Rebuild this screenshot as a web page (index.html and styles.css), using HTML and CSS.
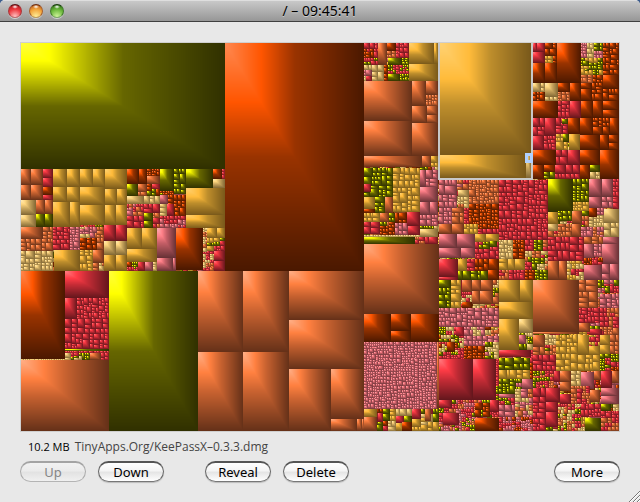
FILE: index.html
```html
<!DOCTYPE html>
<html lang="en">
<head>
<meta charset="utf-8">
<meta name="viewport" content="width=device-width, initial-scale=1">
<title>/ – 09:45:41</title>
<link rel="stylesheet" href="styles.css">
</head>
<body>
<div class="window">
  <header class="titlebar">
    <div class="lights">
      <button class="light light-close" aria-label="Close"></button>
      <button class="light light-minimize" aria-label="Minimize"></button>
      <button class="light light-zoom" aria-label="Zoom"></button>
    </div>
    <h1 class="title">/ – 09:45:41</h1>
  </header>
  <main class="content">
    <canvas class="treemap" id="treemap" width="598" height="388" role="img" aria-label="Disk usage treemap"></canvas>
    <p class="status"><span class="size">10.2 MB</span><span class="path">TinyApps.Org/KeePassX–0.3.3.dmg</span></p>
    <div class="actions">
      <button class="push" disabled>Up</button>
      <button class="push">Down</button>
      <button class="push group-start">Reveal</button>
      <button class="push">Delete</button>
      <button class="push far-end">More</button>
    </div>
  </main>
  <svg class="grip" viewBox="0 0 12 12" aria-hidden="true">
    <path d="M1 12 12 1M5 12l7-7M9 12l3-3" stroke="#777" fill="none"/>
    <path d="M2 12 12 2M6 12l6-6M10 12l2-2" stroke="#fff" fill="none"/>
  </svg>
</div>
<script src="treemap.js"></script>
</body>
</html>
```
FILE: styles.css
```css
* { box-sizing: border-box; }

body {
  margin: 0;
  background: #3c5c8c;
  font-family: "Noto Sans", "Open Sans", sans-serif;
  color: #000;
}

.window {
  position: relative;
  min-height: 100vh;
  background: #e8e8e8;
  border-radius: 5px 5px 0 0;
  overflow: hidden;
}

.titlebar {
  display: grid;
  grid-template-columns: 1fr auto 1fr;
  align-items: center;
  height: 22px;
  padding: 0 8px;
  background: linear-gradient(#c8c8c8, #969696);
  border-top: 1px solid #dedede;
  border-bottom: 1px solid #404040;
}

.lights { display: flex; gap: 7px; }

.light {
  width: 14px;
  height: 14px;
  padding: 0;
  border: 1px solid;
  border-radius: 50%;
  box-shadow: 0 1px 0 #d0d0d0;
}

.light-close {
  border-color: #5c1012 #a8383a #c06a6a;
  background: radial-gradient(ellipse 3px 2px at 50% 15%, #fff, transparent), radial-gradient(circle at 50% 95%, #ffc4c4, #ee3b40 55%, #a00c10);
}

.light-minimize {
  border-color: #6c2c10 #a8602c #c09a5a;
  background: radial-gradient(ellipse 3px 2px at 50% 15%, #fff, transparent), radial-gradient(circle at 50% 95%, #fff09a, #f3a63c 55%, #b24c10);
}

.light-zoom {
  border-color: #173c0c #437c2c #7ca868;
  background: radial-gradient(ellipse 3px 2px at 50% 15%, #fff, transparent), radial-gradient(circle at 50% 95%, #d0f59a, #6bb83c 55%, #24600f);
}

.title {
  margin: 0;
  font-size: 14px;
  font-weight: 400;
  line-height: 20px;
  text-shadow: 0 1px 0 #ccc;
}

.content { padding: 20px 20px 18px; }

.treemap {
  display: block;
  width: 100%;
  height: auto;
  border: 1px solid #cfcfcf;
}

.status {
  display: flex;
  gap: 5px;
  margin: 7px 8px 6px;
  font-family: "Open Sans", "Noto Sans", sans-serif;
  font-size: 11px;
  line-height: 16px;
}

.path { font-size: 12px; color: #444; }

.actions {
  display: flex;
  gap: 12px;
}

.push {
  width: 66px;
  height: 21px;
  padding: 0;
  border: 1px solid #555;
  border-width: 2px 1px 1px;
  border-color: #555 #666 #777;
  border-radius: 11px;
  background: linear-gradient(#fff, #f4f4f4 45%, #e4e4e4 50%, #fff);
  box-shadow: 0 1px 1px #bbb;
  font: 13px/18px "Noto Sans", "Open Sans", sans-serif;
  color: #000;
}

.push:disabled {
  border-color: #a4a4a4 #aaa #b4b4b4;
  background: linear-gradient(#f2f2f2, #ebebeb 45%, #e2e2e2 50%, #f0f0f0);
  box-shadow: none;
  color: #858585;
}

.group-start { margin-left: 29px; }
.far-end { margin-left: auto; }

.grip {
  position: absolute;
  right: 0;
  bottom: 0;
  width: 12px;
  height: 12px;
}
```
FILE: treemap.js
```js
// Each entry: left top right bottom colours [cell size].
// A cell size marks a folder of small files, subdivided to about that size.
const ORIGIN = [21, 43];
const DATA = `
21 43 619 431 RGCPTYO 4
21 43 225 169 Y;225 43 364 271 O;21 169 31 185 C;31 169 43 185 C;43 169 53 178 R;43 178 53 187 R
21 185 31 200 C;31 185 43 200 C;43 187 53 195 O;43 195 53 200 R;21 200 36 215 T;21 215 36 227 T
36 200 45 214 C;45 200 53 214 C;36 214 45 227 Y;45 214 53 227 Y
53 169 67 187 G;67 169 80 187 G;80 169 93 187 G;93 169 105 187 G;105 169 127 189 G
53 187 67 202 G;67 187 80 202 G;80 187 105 205 G;105 189 117 205 G;117 189 127 205 G
53 202 70 227 G;70 202 80 227 G;80 205 105 225 G;105 205 116 225 G;116 205 127 225 G
21 227 43 239 C;43 227 53 239 C 5;21 239 53 251 C 5;21 251 53 271 T 5;53 227 70 250 R 5;70 227 80 250 P 4
54 250 80 271 G;80 227 97 238 CTP 4;80 238 97 250 O 5;97 227 104 250 C 5;80 250 93 271 G 5;93 250 104 263 C;93 263 104 271 TC 4
104 225 116 241 R;116 225 127 241 R;104 241 116 255 T;116 241 127 255 T;104 255 116 271 G;116 255 127 271 G
127 169 139 184 O;139 169 147 184 O;147 169 160 176 O 3;147 176 160 184 C;127 184 138 196 Y;138 184 147 192 C;138 192 147 196 C 4;147 184 160 196 YRO 5
160 169 174 191 Y;174 169 186 194 Y 6;160 191 174 195 YO 3;127 196 144 204 T;144 196 150 204 T;150 196 160 204 T 5
160 195 168 204 P;168 195 186 217 O 5;127 204 144 216 RPC 4;127 216 144 228 R 6;144 204 160 213 R 6;144 213 153 221 Y;144 221 153 228 Y;153 213 160 228 RC 4
160 204 167 216 T 5;167 204 174 216 R;160 216 186 228 PR 4
186 169 213 188 Y;213 169 222 179 O;222 169 225 179 RP 3;213 179 225 188 T;186 188 225 215 G;186 215 225 228 G
127 228 142 249 G;142 228 157 249 G;127 249 157 262 G;127 262 138 271 OYR 3;138 262 145 271 R;145 262 157 271 TP 5
157 228 176 258 P;157 258 173 271 P;173 258 176 271 P;176 228 203 270 O;203 228 214 271 TCR 3;207 228 217 238 G;217 228 225 238 G;207 238 225 251 GYR 4;214 251 225 261 R;214 261 225 271 R
21 271 65 359 O;65 271 109 298 R;65 298 77 319 R;77 298 109 319 R 4;65 319 109 334 R 6;65 334 109 349 R 5;65 349 109 351 Y;65 351 109 353 R 3;65 353 90 360 YTR 4;90 353 101 360 C;101 353 109 360 OR 4
21 359 65 360 T 2;21 360 109 431 C;109 271 198 431 Y
198 271 243 352 C;243 271 289 352 C;198 352 243 431 C;243 352 289 431 C;289 271 364 320 C;289 320 364 369 C;289 369 331 431 C;331 369 364 419 C;331 419 357 431 C;357 419 362 431 C;362 419 364 431 C
364 43 378 58 OR 4;378 43 387 65 C;387 43 396 51 O;387 51 396 58 CO 4;396 43 409 58 R 4;388 58 402 65 Y;402 58 409 65 Y 3;364 58 378 65 YCR 4;372 65 384 81 T 5;364 65 372 81 PRT 4;384 65 388 81 O 4;388 65 409 74 YR 3;388 74 400 81 Y;400 74 409 81 YR 3
409 43 434 64 G;434 43 438 64 G;409 64 438 81 G;364 81 412 121 C;412 81 426 106 C;426 81 438 95 C;426 95 438 106 C 4;412 106 427 123 C;427 106 438 115 C;427 115 438 123 C;364 121 412 156 C;412 123 438 156 C
364 156 422 167 C;422 156 431 167 C;431 156 438 167 OG 4;364 168 393 197 Y 6;364 184 371 192 R;393 168 420 212 G 7
420 170 426 187 P;426 170 438 187 P 6;420 187 438 202 P;420 202 430 215 P;430 202 438 215 P;420 215 438 226 P 5
364 197 375 209 G;375 197 385 213 YG 6;385 197 393 213 C;364 209 375 213 O;364 213 380 222 G 6;364 222 380 234 R 8;380 213 395 235 YCO 5;395 213 407 223 O 7;395 223 408 235 P 7;407 212 420 226 R;408 226 420 235 R
364 235 420 237 T 3;364 237 415 244 Y;420 226 438 229 YT 3;420 229 438 237 T;415 237 429 244 CR 4;429 237 438 244 R;364 244 439 314 C
364 314 391 342 O;391 314 411 331 O;391 331 411 342 O;411 314 439 342 O;364 342 437 409 P 3;437 342 439 409 C
364 409 439 431 GTOYR 6;364 409 377 417 G;364 417 377 431 C;402 422 412 431 O;425 409 431 421 C
439 180 457 208 P 7;457 180 469 190 CRP 4;458 190 469 197 T;458 197 469 208 TCO 5;469 180 499 204 C 4;469 204 499 229 O 4;439 208 452 224 P 4;452 208 464 224 C 8;464 208 469 224 R 4
439 224 452 234 C;452 224 464 234 C;464 224 478 234 GCR 4;478 229 499 234 R 6;439 234 457 248 P;457 234 475 248 P;439 248 461 258 P;461 248 475 258 P
475 234 486 242 G;486 234 499 242 G;475 242 499 259 YRG 5;490 241 497 247 Y;439 259 458 277 R;439 277 458 280 R;458 259 467 271 G;467 259 475 271 R 6;458 271 488 280 Y 6;475 259 499 271 O 8;488 270 499 280 O
439 280 451 308 Y 7;451 280 461 308 G 7;462 280 472 292 C;462 292 472 302 CRT 3;462 302 472 308 O;472 280 493 304 C 10;493 280 499 304 YTC 4;439 308 499 327 P 5
439 327 464 352 YTRO 3;447 342 455 352 O;456 327 464 336 R;464 327 485 336 TP 4;464 336 499 346 P 5;464 346 485 359 O 4;439 352 464 359 YTR 3;485 342 499 359 TPY 4
439 359 473 400 R;473 359 496 400 R;496 359 499 400 RY 3;439 400 499 431 RYCP 3;439 400 452 408 R;443 413 459 425 R;475 403 490 417 YO 5;490 400 499 412 R;475 418 499 431 O
440 43 531 155 G;440 155 526 178 G;526 155 531 178 T
533 43 545 63 R 8;545 43 557 63 OG 5;533 63 545 83 O;545 63 557 83 O;557 43 581 83 O;581 43 587 58 P 3;587 43 594 58 T 4;594 43 603 51 Y 4;594 51 603 60 P 4;581 58 603 75 GY 4;581 75 603 83 OC 5
603 43 619 75 O 5;603 75 619 89 O;603 89 619 101 O 6;533 83 545 92 T 6;545 83 558 97 T;533 92 545 101 O 5;545 97 558 101 T 5;558 83 570 92 O;570 83 581 101 O;558 92 570 101 RC 4
533 101 558 118 O;558 101 570 118 R 5;570 101 581 118 R;581 83 592 89 O;592 83 603 101 O 5;581 89 592 101 O;581 101 593 118 O;593 101 603 118 O;603 101 619 110 O;603 110 619 118 O
533 118 545 136 R 6;545 118 556 136 R;533 136 544 150 R;544 136 556 150 R 5;556 118 568 134 OR 5;562 119 568 124 Y;568 118 580 134 O;556 134 568 150 G 5;563 134 569 142 Y;569 134 580 150 G
580 118 593 135 O;593 118 610 127 O 5;593 127 603 135 O;603 127 610 135 O;610 118 619 135 O;580 135 600 150 O;600 135 609 150 O;609 135 619 143 O;609 143 619 150 O
533 150 556 165 O;556 150 568 165 R 6;568 150 580 165 R;533 165 544 179 O 8;544 165 556 172 O;544 172 556 179 Y 6;555 165 580 179 R 7;580 150 600 165 O;600 150 619 179 O;580 165 590 179 O;590 165 600 172 Y;590 172 600 179 T 4
499 180 548 240 R 5;548 179 573 212 Y;573 179 589 202 Y 5;573 202 589 211 G 4;589 179 602 197 P;602 179 613 197 P;613 179 619 209 R 5;589 197 602 208 P;602 197 613 208 P 6
548 212 558 224 G;558 211 572 221 Y 5;572 211 582 224 C;582 211 589 227 YRC 4;589 208 604 227 T 4;589 208 597 217 O;597 208 604 215 P 4;604 209 619 223 T;604 223 619 237 T 8;548 224 558 231 T;548 231 558 237 RC 4;558 224 572 237 C 5;572 224 581 237 C;581 227 604 237 PC 4
548 237 584 261 R 7;584 237 603 244 C 5;603 237 619 244 P;584 244 594 259 P;594 244 602 257 P 6;602 244 619 264 P;584 258 603 265 PRO 4;584 265 602 280 P;602 264 619 280 P 9;548 261 559 280 C;559 261 567 280 C;567 261 584 280 TRG 4
499 240 513 259 T 4;513 240 525 259 O 4;525 240 548 270 YRTC 4;499 259 525 270 TG 7;499 270 525 280 RC 5;525 270 535 280 O 5;535 270 548 280 Y 4
499 280 520 302 G;520 280 533 302 G;499 302 533 319 G;533 280 579 332 C;579 280 598 308 C 8;598 280 619 293 YPR 4;600 294 619 308 P 5;579 308 600 323 R 5;600 308 619 335 RC 4;579 323 590 332 C;590 329 602 335 R
499 319 519 350 G;519 319 533 333 T;519 333 533 350 TYC 4;519 335 526 344 P;499 350 531 357 R;533 332 579 334 C
533 335 545 347 C;533 347 545 355 C 6;545 335 557 345 T 5;545 345 557 355 RCY 4;533 355 556 371 R 6;556 335 578 371 G 5;578 335 589 355 G;578 355 600 371 G 6;589 335 600 346 RG 4;589 346 600 355 G;600 335 610 354 G 9;610 335 619 354 C 6;600 354 619 371 YRO 4
499 358 530 370 Y 7;499 370 530 379 G 6;530 358 533 379 OR 4;499 379 516 394 Y 5;516 379 522 394 YP 4;522 379 533 389 P;515 389 533 431 PCT 4;499 394 515 398 P;499 398 515 405 YR 3;499 405 515 417 P 7;499 417 533 431 PRO 3
533 371 554 388 YRC 3;554 371 560 382 R;533 388 546 403 R 6;546 388 560 402 R;560 371 571 382 C;560 382 571 391 C;571 371 581 386 T 5;581 372 594 389 P;594 371 601 380 C;601 371 612 388 R;612 371 619 383 C;560 394 571 404 R;571 386 590 404 RC 4;590 390 600 402 C;601 388 619 396 P;601 396 619 404 P
533 403 546 431 R 5;546 402 558 412 R;546 412 558 427 R;558 404 581 431 TRCY 3;581 404 601 417 R 5;585 418 601 431 Y;601 404 611 411 Y;601 411 619 431 RC 4
`;

// Stops: position then r, g, b.
const SHADES = {
  Y: [[0, 255, 255, 60], [.14, 255, 255, 0], [.5, 102, 102, 0], [1, 48, 48, 0]],
  O: [[0, 255, 136, 80], [.26, 255, 85, 0], [.5, 153, 51, 0], [1, 74, 24, 0]],
  C: [[0, 255, 175, 135], [.26, 255, 128, 64], [.5, 200, 98, 48], [1, 100, 48, 24]],
  G: [[0, 255, 210, 115], [.32, 255, 187, 58], [.55, 190, 142, 44], [1, 120, 88, 26]],
  R: [[0, 255, 125, 130], [.26, 255, 60, 70], [.5, 198, 44, 54], [1, 98, 22, 28]],
  P: [[0, 255, 175, 180], [.26, 255, 128, 136], [.5, 196, 94, 102], [1, 100, 48, 52]],
  T: [[0, 255, 235, 180], [.26, 255, 215, 128], [.55, 200, 165, 94], [1, 125, 100, 50]]
};

let seed = 94541;
function random() {
  seed = (seed * 1664525 + 1013904223) % 4294967296;
  return seed / 4294967296;
}

function shade(name, t) {
  const stops = SHADES[name];
  let i = 1;
  while (i < stops.length - 1 && t > stops[i][0]) i++;
  const a = stops[i - 1], b = stops[i];
  const f = Math.min(1, (t - a[0]) / (b[0] - a[0]));
  return [1, 2, 3].map(k => a[k] + (b[k] - a[k]) * f);
}

const canvas = document.getElementById("treemap");
const ctx = canvas.getContext("2d");
const image = ctx.createImageData(canvas.width, canvas.height);

// Both axes darken away from the top left; the darker one wins.
function drawFile(x0, y0, x1, y1, name) {
  for (let y = y0; y < y1; y++) {
    for (let x = x0; x < x1; x++) {
      const t = Math.max((x - x0 + .3) / (x1 - x0), (y - y0 + .3) / (y1 - y0));
      const rgb = shade(name, t);
      const i = ((y - ORIGIN[1]) * canvas.width + x - ORIGIN[0]) * 4;
      image.data.set([rgb[0], rgb[1], rgb[2], 255], i);
    }
  }
}

function drawFolder(x0, y0, x1, y1, names, cell) {
  const w = x1 - x0, h = y1 - y0;
  if (names.length > 1 && w * h < cell * cell * 4 && random() < .5) {
    names = names[Math.floor(random() * names.length)];
  }
  const limit = cell * (.8 + random() * 1.1);
  if (Math.max(w, h) < limit || Math.max(w, h) < 2) {
    drawFile(x0, y0, x1, y1, names[Math.floor(random() * names.length)]);
    return;
  }
  const part = .3 + random() * .4;
  if (w > h) {
    const x = x0 + Math.max(1, Math.round(w * part));
    drawFolder(x0, y0, x, y1, names, cell);
    drawFolder(x, y0, x1, y1, names, cell);
  } else {
    const y = y0 + Math.max(1, Math.round(h * part));
    drawFolder(x0, y0, x1, y, names, cell);
    drawFolder(x0, y, x1, y1, names, cell);
  }
}

for (const entry of DATA.trim().split(/[;\n]/)) {
  const [x0, y0, x1, y1, names, cell] = entry.split(" ");
  const box = [x0, y0, x1, y1].map(Number);
  if (cell) drawFolder(...box, names, Number(cell));
  else drawFile(...box, names);
}
ctx.putImageData(image, 0, 0);

// Outline of the enclosing folder and of the selected file.
ctx.translate(-ORIGIN[0], -ORIGIN[1]);
ctx.strokeStyle = "#c8c8c8";
ctx.lineWidth = 2;
ctx.strokeRect(439, 42, 93, 137);
ctx.strokeStyle = "#b0d0ff";
ctx.lineWidth = 3;
ctx.strokeRect(526.5, 154.5, 5, 7);
```
